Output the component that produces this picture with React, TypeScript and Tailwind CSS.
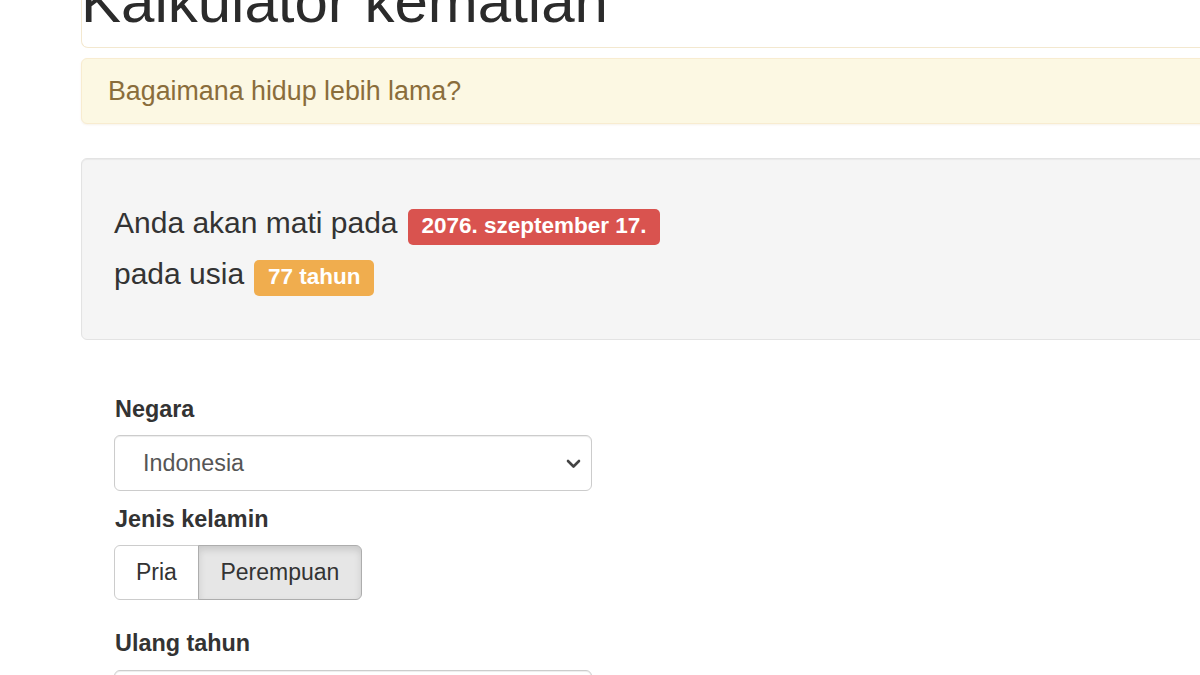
import React from "react";

export default function App() {
  return (
    <div
      className="w-[1200px] h-[675px] overflow-hidden bg-white text-[#333]"
      style={{ fontFamily: '"Liberation Sans", Arial, sans-serif' }}
    >
      <div className="ml-[81px] w-[1200px]">
        {/* top box with title */}
        <div className="-mt-[28px] pb-[15px] border-b border-l border-[#f3e8cf] rounded-bl-[7px]">
          <h1 className="-ml-[1px] text-[60px] leading-[60px] font-normal text-[#2b2b2b] whitespace-nowrap">
            Kalkulator kematian
          </h1>
        </div>

        {/* alert */}
        <div className="mt-[10px] h-[66px] flex items-center pl-[26px] bg-[#fcf8e3] border border-[#f8ecd0] rounded-[6px] text-[26.8px] text-[#8a6d3b] shadow-[0_1px_2px_rgba(180,150,90,0.12)]">
          Bagaimana hidup lebih lama?
        </div>

        {/* well */}
        <div className="mt-[34px] h-[182px] bg-[#f5f5f5] border border-[#e3e3e3] rounded-[6px] shadow-[inset_0_1px_1px_rgba(0,0,0,0.05)] pl-[32px] pt-[38px] text-[30px] leading-[51px]">
          <div className="whitespace-nowrap">
            Anda akan mati pada{" "}
            <span className="inline-block ml-[2px] bg-[#d9534f] text-white font-bold text-[22.5px] leading-[23px] pt-[5px] pb-[8px] px-[13.5px] rounded-[5px] align-baseline">
              2076. szeptember 17.
            </span>
          </div>
          <div className="whitespace-nowrap">
            pada usia{" "}
            <span className="inline-block ml-[2px] bg-[#f0ad4e] text-white font-bold text-[22.5px] leading-[23px] pt-[5px] pb-[8px] px-[13.5px] rounded-[5px] align-baseline">
              77 tahun
            </span>
          </div>
        </div>

        {/* form */}
        <div className="mt-[53px] pl-[33px] flex flex-col items-start">
          <label className="block pl-[1px] text-[23.4px] leading-[33px] font-bold mb-[9px] text-[#333]">
            Negara
          </label>
          <div className="w-[478px] h-[56px] border border-[#cccccc] rounded-[6px] bg-white flex items-center justify-between pl-[28px] pr-[10px] shadow-[inset_0_1px_1px_rgba(0,0,0,0.075)]">
            <span className="text-[23.3px] text-[#555]">Indonesia</span>
            <svg width="15" height="10" viewBox="0 0 15 10" className="mt-[1px]">
              <path d="M2 2 L7.5 7.5 L13 2" fill="none" stroke="#444" strokeWidth="2.6" strokeLinecap="round" strokeLinejoin="round" />
            </svg>
          </div>

          <label className="block pl-[1px] mt-[12px] text-[23.4px] leading-[33px] font-bold mb-[9px] text-[#333]">
            Jenis kelamin
          </label>
          <div className="flex h-[55px]">
            <div className="h-full flex items-center px-[21px] border border-[#cccccc] rounded-l-[6px] bg-white text-[23px] text-[#333]">
              Pria
            </div>
            <div className="h-full flex items-center px-[21.5px] -ml-px border border-[#adadad] rounded-r-[6px] bg-[#e6e6e6] text-[23px] text-[#333] shadow-[inset_0_4px_7px_rgba(0,0,0,0.125)]">
              Perempuan
            </div>
          </div>

          <label className="block pl-[1px] mt-[27px] text-[23.4px] leading-[33px] font-bold mb-[10px] text-[#333]">
            Ulang tahun
          </label>
          <div className="w-[478px] h-[56px] border border-[#cccccc] rounded-[6px] bg-white shadow-[inset_0_1px_1px_rgba(0,0,0,0.075)]" />
        </div>
      </div>
    </div>
  );
}
